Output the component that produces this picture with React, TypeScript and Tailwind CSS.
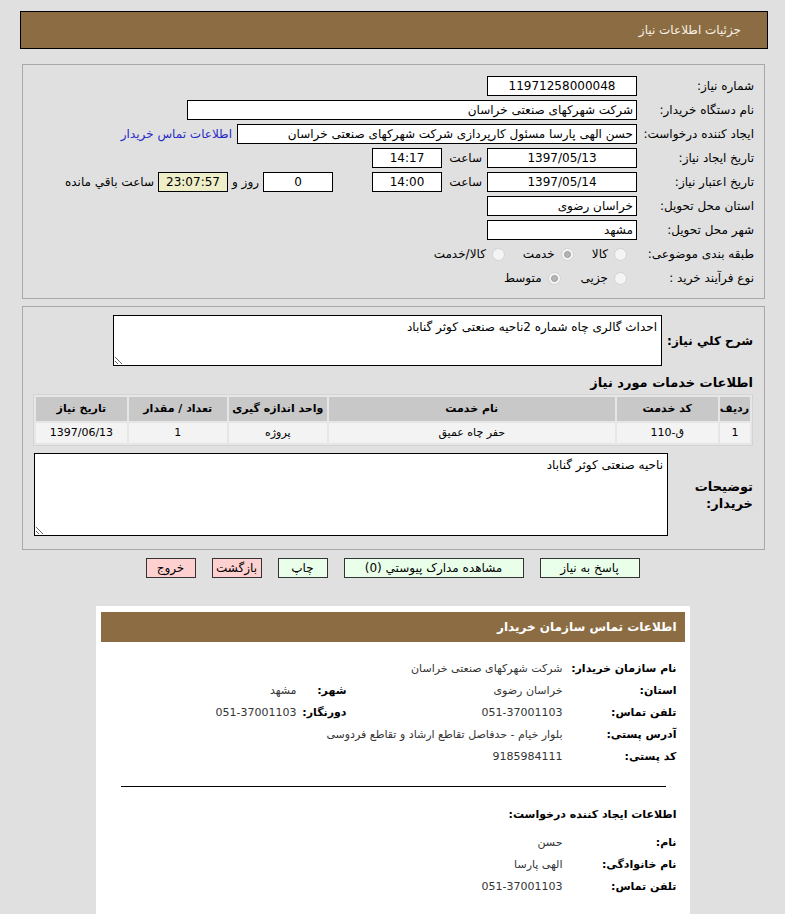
import React from "react";

function Box({ w, children, center, bg }: { w: string; children?: React.ReactNode; center?: boolean; bg?: string }) {
  return (
    <div
      className={`${w} ${bg ?? "bg-white"} h-[20px] shrink-0 border border-black flex items-center px-[3px] overflow-hidden whitespace-nowrap ${center ? "justify-center" : "justify-start"}`}
    >
      {children}
    </div>
  );
}

function Radio({ checked, label }: { checked?: boolean; label: string }) {
  return (
    <div className="flex items-center">
      <span className="w-[13px] h-[13px] rounded-full border border-[#d2d2d2] bg-[#f4f4f4] flex items-center justify-center">
        {checked ? <span className="w-[7px] h-[7px] rounded-full border border-[#9a9a9a] bg-[#b4b4b4]" /> : null}
      </span>
      <span className="mr-[6px]">{label}</span>
    </div>
  );
}

function Row({ label, children }: { label: string; children?: React.ReactNode }) {
  return (
    <div className="flex items-center h-[24px]">
      <div className="w-[117px] shrink-0 whitespace-nowrap">{label}</div>
      {children}
    </div>
  );
}

export default function App() {
  return (
    <div
      dir="rtl"
      className="min-h-[914px] bg-[#e0e0e0] text-black text-[12px] font-[Tahoma,'DejaVu_Sans',sans-serif] pt-[11px] pb-[20px] overflow-hidden"
    >
      <div className="ml-[20px] mr-[17px] h-[38px] bg-[#8c6d43] border border-black flex items-center pr-[26px] text-[#f6f0e4] text-[12px]">
        جزئیات اطلاعات نیاز
      </div>

      {/* panel 1 */}
      <div className="mt-[15px] ml-[22px] mr-[20px] h-[235px] border border-[#a8a8a8] pt-[9px] pr-[10px]">
        <Row label="شماره نیاز:">
          <Box w="w-[150px]" center>11971258000048</Box>
        </Row>
        <Row label="نام دستگاه خریدار:">
          <Box w="w-[450px]">شرکت شهرکهای صنعتی خراسان</Box>
        </Row>
        <Row label="ایجاد کننده درخواست:">
          <Box w="w-[400px]">حسن الهی پارسا مسئول کارپردازی شرکت شهرکهای صنعتی خراسان</Box>
          <span className="mr-[5px] text-[#2929c8] whitespace-nowrap">اطلاعات تماس خریدار</span>
        </Row>
        <Row label="تاریخ ایجاد نیاز:">
          <Box w="w-[150px]" center>1397/05/13</Box>
          <span className="w-[45px] pr-[5px] shrink-0">ساعت</span>
          <Box w="w-[70px]" center>14:17</Box>
        </Row>
        <Row label="تاریخ اعتبار نیاز:">
          <Box w="w-[150px]" center>1397/05/14</Box>
          <span className="w-[45px] pr-[5px] shrink-0">ساعت</span>
          <Box w="w-[70px]" center>14:00</Box>
          <div className="w-[39px] shrink-0" />
          <Box w="w-[70px]" center>0</Box>
          <span className="mr-[4px] ml-[4px] whitespace-nowrap">روز و</span>
          <Box w="w-[70px]" center bg="bg-[#eeeec8]">23:07:57</Box>
          <span className="mr-[4px] whitespace-nowrap">ساعت باقي مانده</span>
        </Row>
        <Row label="استان محل تحویل:">
          <Box w="w-[150px]">خراسان رضوی</Box>
        </Row>
        <Row label="شهر محل تحویل:">
          <Box w="w-[150px]">مشهد</Box>
        </Row>
        <Row label="طبقه بندی موضوعی:">
          <div className="mr-[10px] flex items-center gap-[18px]">
            <Radio label="کالا" />
            <Radio label="خدمت" checked />
            <Radio label="کالا/خدمت" />
          </div>
        </Row>
        <Row label="نوع فرآیند خرید :">
          <div className="mr-[10px] flex items-center gap-[20px]">
            <Radio label="جزیی" />
            <Radio label="متوسط" checked />
          </div>
        </Row>
      </div>

      {/* panel 2 */}
      <div className="mt-[7px] ml-[22px] mr-[20px] h-[244px] border border-[#a8a8a8] pt-[8px] px-[11px]">
        <div className="flex items-center">
          <div className="w-[91px] shrink-0 font-bold text-[12px] whitespace-nowrap">شرح کلي نياز:</div>
          <textarea
            readOnly
            className="w-[549px] h-[51px] border border-black bg-white px-[4px] py-[2px] text-[12px] resize-y outline-none font-[Tahoma,'DejaVu_Sans',sans-serif]"
            defaultValue="احداث گالری چاه شماره 2ناحیه صنعتی کوثر گناباد"
          />
        </div>
        <div className="mt-[8px] font-bold text-[13px] h-[18px] leading-[18px]">اطلاعات خدمات مورد نیاز</div>
        <table className="mt-[2px] w-[720px] border border-[#d4d4d4] border-separate border-spacing-[2px] bg-[#e6e6e6] text-[11px]">
          <thead>
            <tr className="h-[24px] bg-[#c8c8c8] font-bold">
              <th className="w-[25px] font-bold text-right pr-[1px]">ردیف</th>
              <th className="w-[101px] font-bold">کد خدمت</th>
              <th className="w-[286px] font-bold">نام خدمت</th>
              <th className="w-[98px] font-bold">واحد اندازه گیری</th>
              <th className="w-[98px] font-bold">تعداد / مقدار</th>
              <th className="font-bold">تاریخ نیاز</th>
            </tr>
          </thead>
          <tbody>
            <tr className="h-[20px] bg-[#f3f3f3] text-center">
              <td>1</td>
              <td>ق-110</td>
              <td>حفر چاه عمیق</td>
              <td>پروژه</td>
              <td>1</td>
              <td>1397/06/13</td>
            </tr>
          </tbody>
        </table>
        <div className="mt-[7px] flex items-center">
          <div className="w-[85px] shrink-0 font-bold text-[13px] leading-[17px]">
            توضیحات
            <br />
            خریدار:
          </div>
          <textarea
            readOnly
            className="w-[636px] h-[83px] border border-black bg-white px-[4px] py-[2px] text-[12px] resize-y outline-none font-[Tahoma,'DejaVu_Sans',sans-serif]"
            defaultValue="ناحیه صنعتی کوثر گناباد"
          />
        </div>
      </div>

      {/* buttons */}
      <div className="mt-[8px] flex justify-center gap-[16px] text-[12px]">
        <div className="w-[100px] h-[20px] border border-[#333] bg-[#eaffea] flex items-center justify-center">پاسخ به نیاز</div>
        <div className="w-[180px] h-[20px] border border-[#333] bg-[#eaffea] flex items-center justify-center">مشاهده مدارک پیوستي (0)</div>
        <div className="w-[50px] h-[20px] border border-[#333] bg-[#eaffea] flex items-center justify-center">چاپ</div>
        <div className="w-[50px] h-[20px] border border-[#333] bg-[#ffd0d0] flex items-center justify-center">بازگشت</div>
        <div className="w-[50px] h-[20px] border border-[#333] bg-[#ffd0d0] flex items-center justify-center">خروج</div>
      </div>

      {/* contact card */}
      <div className="mt-[28px] mx-auto w-[594px] bg-white pt-[6px] px-[5px] pb-[20px]">
        <div className="h-[30px] bg-[#8c6d43] flex items-center pr-[8px] text-white font-bold text-[12px]">
          اطلاعات تماس سازمان خریدار
        </div>
        <div className="pr-[8px] pl-[20px] text-[11px]">
          <table className="mt-[16px] w-full">
            <tbody className="[&_td]:h-[22px] [&_td]:whitespace-nowrap">
              <tr>
                <td className="w-[114px] font-bold">نام سازمان خریدار:</td>
                <td colSpan={3} className="text-[#333]">شرکت شهرکهای صنعتی خراسان</td>
              </tr>
              <tr>
                <td className="font-bold">استان:</td>
                <td className="w-[216px] text-[#333]">خراسان رضوی</td>
                <td className="w-[50px] font-bold">شهر:</td>
                <td className="text-[#333]">مشهد</td>
              </tr>
              <tr>
                <td className="font-bold">تلفن تماس:</td>
                <td className="text-[#333]">051-37001103</td>
                <td className="font-bold">دورنگار:</td>
                <td className="text-[#333]">051-37001103</td>
              </tr>
              <tr>
                <td className="font-bold">آدرس پستی:</td>
                <td colSpan={3} className="text-[#333]">بلوار خیام - حدفاصل تقاطع ارشاد و تقاطع فردوسی</td>
              </tr>
              <tr>
                <td className="font-bold">کد پستی:</td>
                <td colSpan={3} className="text-[#333]">9185984111</td>
              </tr>
            </tbody>
          </table>
          <div className="mt-[18px] mr-[11px] border-t border-black" />
          <div className="mt-[20px] font-bold">اطلاعات ایجاد کننده درخواست:</div>
          <table className="mt-[9px] w-full">
            <tbody className="[&_td]:h-[22px] [&_td]:whitespace-nowrap">
              <tr>
                <td className="w-[114px] font-bold">نام:</td>
                <td className="text-[#333]">حسن</td>
              </tr>
              <tr>
                <td className="font-bold">نام خانوادگی:</td>
                <td className="text-[#333]">الهی پارسا</td>
              </tr>
              <tr>
                <td className="font-bold">تلفن تماس:</td>
                <td className="text-[#333]">051-37001103</td>
              </tr>
            </tbody>
          </table>
        </div>
      </div>
    </div>
  );
}
